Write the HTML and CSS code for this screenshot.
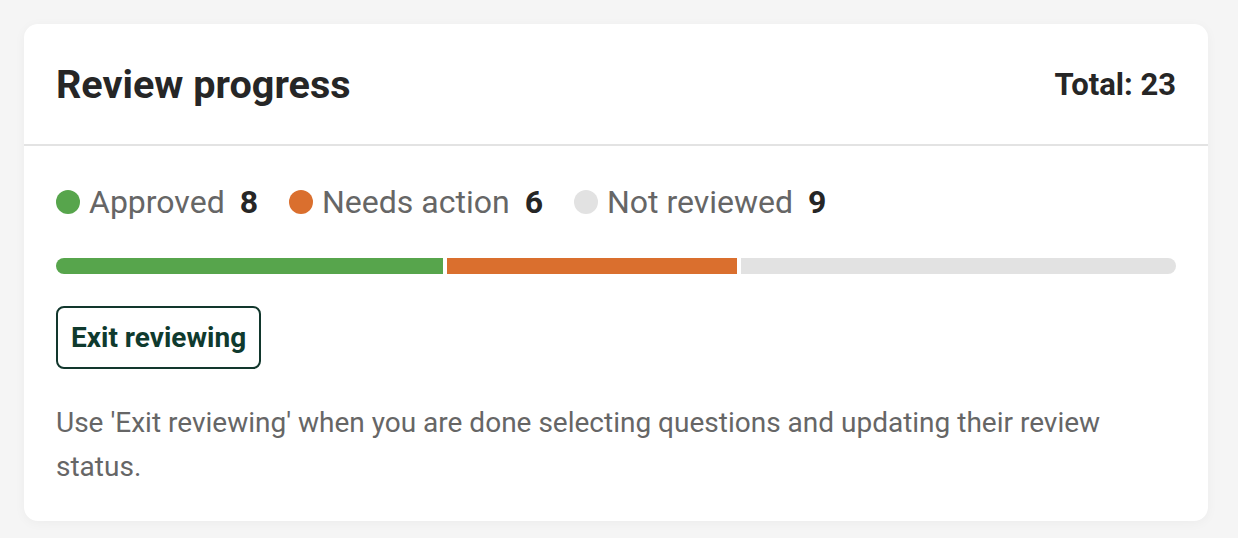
FILE: index.html
```html
<!DOCTYPE html>
<html lang="en">
<head>
<meta charset="utf-8">
<title>Review progress</title>
<link rel="stylesheet" href="styles.css">
</head>
<body>
<section class="card">
  <header class="card-header">
    <h2 class="title">Review progress</h2>
    <span class="total">Total: 23</span>
  </header>
  <div class="card-body">
    <ul class="legend">
      <li class="legend-item"><span class="dot dot-approved"></span><span class="label">Approved</span><span class="count">8</span></li>
      <li class="legend-item"><span class="dot dot-action"></span><span class="label">Needs action</span><span class="count">6</span></li>
      <li class="legend-item"><span class="dot dot-none"></span><span class="label">Not reviewed</span><span class="count">9</span></li>
    </ul>
    <div class="bar">
      <div class="seg seg-approved" style="flex-grow: 8"></div>
      <div class="seg seg-action" style="flex-grow: 6"></div>
      <div class="seg seg-none" style="flex-grow: 9"></div>
    </div>
    <button class="btn" type="button">Exit reviewing</button>
    <p class="hint">Use 'Exit reviewing' when you are done selecting questions and updating their review status.</p>
  </div>
</section>
</body>
</html>
```
FILE: styles.css
```css
* { box-sizing: border-box; }
html, body { margin: 0; }
body {
  background: #f5f5f5;
  padding: 24px 30px 16px 24px;
  font-family: Roboto, "Liberation Sans", Arial, sans-serif;
}
.card {
  background: #fff;
  border-radius: 14px;
  box-shadow: 0 2px 12px rgba(0,0,0,0.04);
}
.card-header {
  display: flex;
  align-items: center;
  justify-content: space-between;
  padding: 0 32px;
  height: 122px;
  border-bottom: 2px solid #e3e3e3;
}
.title {
  margin: 0;
  font-size: 39.6px;
  font-weight: 700;
  color: #262626;
}
.total {
  font-size: 31px;
  font-weight: 700;
  color: #262626;
}
.card-body {
  padding: 36px 32px 32px;
}
.legend {
  list-style: none;
  margin: 0;
  padding: 0;
  display: flex;
  gap: 31px;
  height: 40px;
  align-items: center;
}
.legend-item {
  display: flex;
  align-items: center;
  font-size: 32px;
}
.dot {
  width: 24px;
  height: 24px;
  border-radius: 50%;
  margin-right: 9px;
}
.dot-approved { background: #57a54c; }
.dot-action { background: #da6f2e; }
.dot-none { background: #e2e2e2; }
.label { color: #666; }
.count {
  margin-left: 15px;
  font-weight: 700;
  color: #262626;
}
.bar {
  display: flex;
  gap: 4px;
  height: 16px;
  margin-top: 36px;
  border-radius: 8px;
  overflow: hidden;
}
.seg { flex-basis: 0; }
.seg-approved { background: #57a54c; }
.seg-action { background: #da6f2e; }
.seg-none { background: #e2e2e2; }
.btn {
  display: block;
  margin-top: 32px;
  height: 63px;
  padding: 0 13px;
  border: 2px solid #12372d;
  border-radius: 8px;
  background: #fff;
  font-family: inherit;
  font-size: 28px;
  font-weight: 700;
  color: #0f3a2e;
}
.hint {
  margin: 32px 0 0;
  font-size: 28px;
  line-height: 44px;
  color: #666;
}
```
